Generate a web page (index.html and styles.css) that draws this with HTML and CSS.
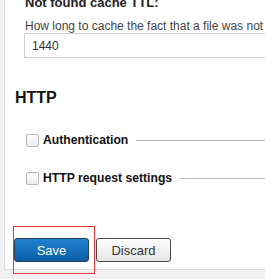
FILE: index.html
```html
<!DOCTYPE html>
<html lang="en">
<head>
    <meta charset="UTF-8">
    <meta name="viewport" content="width=device-width, initial-scale=1.0">
    <title>Settings</title>
    <link rel="stylesheet" href="styles.css">
</head>
<body>
    <div class="panel">
        <div class="field">
            <label class="field__label" for="ttl">Not found cache TTL:</label>
            <div class="field__hint">How long to cache the fact that a file was not found (minutes)</div>
            <input class="field__input" id="ttl" type="text" value="1440">
        </div>

        <h2 class="section-title">HTTP</h2>

        <div class="toggle-row">
            <span class="checkbox"></span>
            <span class="toggle-row__label">Authentication</span>
            <span class="toggle-row__line"></span>
        </div>
        <div class="toggle-row">
            <span class="checkbox"></span>
            <span class="toggle-row__label">HTTP request settings</span>
            <span class="toggle-row__line"></span>
        </div>

        <div class="actions">
            <span class="highlight">
                <button class="btn btn--primary">Save</button>
            </span>
            <button class="btn">Discard</button>
        </div>
    </div>
</body>
</html>
```

FILE: styles.css
```css
* {
	box-sizing: border-box;
	margin: 0;
	padding: 0;
}

body {
	background-color: #f0f0f0;
	font-family: "Liberation Sans", Arial, sans-serif;
	color: #222;
	overflow: hidden;
	height: 279px;
}

/* Panel */
.panel {
	margin-left: 4px;
	width: 420px;
	background-color: #fff;
	border-left: 1px solid #dadada;
	border-bottom: 1px solid #dadada;
	padding-bottom: 7px;
}

.field {
	padding-left: 19px;
	margin-top: -5px;
}

.field__label {
	display: block;
	font-size: 13px;
	font-weight: bold;
	line-height: 16px;
	color: #222;
	margin-bottom: 9px;
	padding-left: 1px;
}

.field__hint {
	font-size: 12px;
	line-height: 13px;
	color: #444;
	padding-left: 1px;
	white-space: nowrap;
}

.field__input {
	display: block;
	width: 380px;
	height: 25px;
	border: 1px solid #d0d0d0;
	padding: 0 7px;
	font-family: inherit;
	font-size: 12px;
	color: #333;
	outline: none;
}

.section-title {
	font-size: 16px;
	line-height: 20px;
	font-weight: bold;
	color: #111;
	margin-top: 30px;
	padding-left: 10px;
}

/* Checkbox rows */
.toggle-row {
	display: flex;
	align-items: center;
	height: 20px;
	padding-left: 21px;
	margin-top: 18px;
}

.section-title + .toggle-row {
	margin-top: 22px;
}

.checkbox {
	width: 13px;
	height: 13px;
	flex-shrink: 0;
	border: 1px solid #b8b8b8;
	border-radius: 2px;
	background: linear-gradient(#fdfdfd, #ececec);
}

.toggle-row__label {
	font-size: 12.2px;
	font-weight: bold;
	color: #111;
	margin-left: 4px;
	white-space: nowrap;
}

.toggle-row__line {
	flex: 1;
	height: 1px;
	background-color: #b3b6c6;
	margin-left: 8px;
}

/* Buttons */
.actions {
	display: flex;
	gap: 7px;
	margin-top: 50px;
	padding-left: 9px;
}

.highlight {
	position: relative;
	display: flex;
}

.highlight::after {
	content: '';
	position: absolute;
	left: -1px;
	top: -12px;
	width: 80px;
	height: 46px;
	border: 1px solid #e8383a;
	pointer-events: none;
}

.btn {
	width: 75px;
	height: 24px;
	border: 1px solid #4a4a4a;
	border-radius: 3px;
	background: linear-gradient(#ffffff, #e4e4e4);
	font-family: inherit;
	font-size: 13px;
	color: #333;
}

.btn--primary {
	border-color: #2c3e50;
	background: linear-gradient(#2183d0, #0a5ba4);
	color: #fff;
}
```
